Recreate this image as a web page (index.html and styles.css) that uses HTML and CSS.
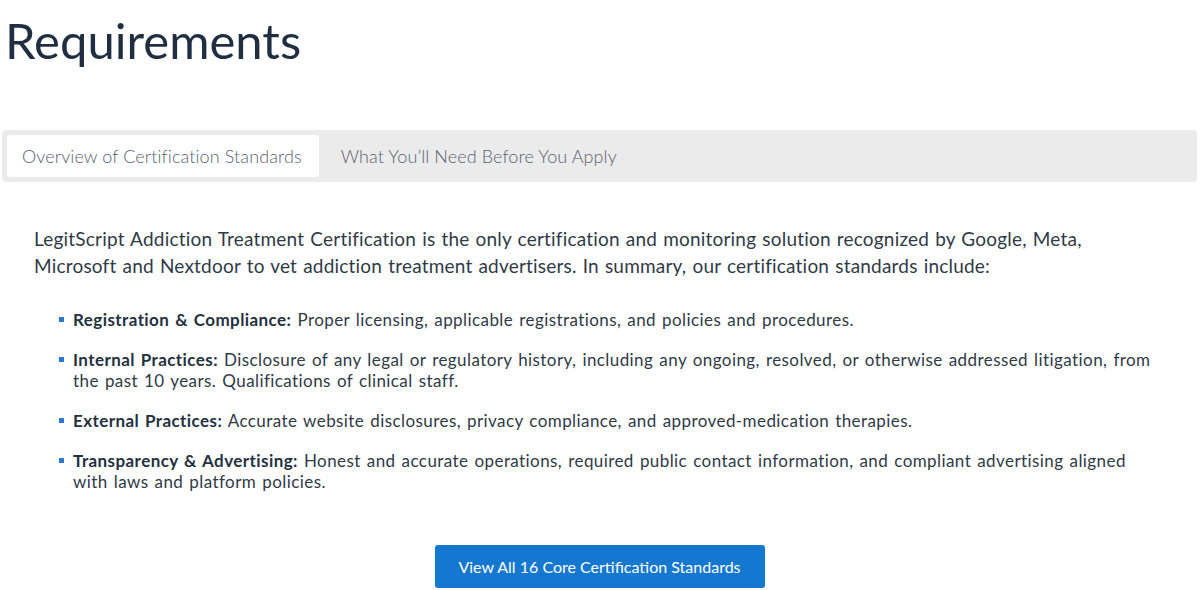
FILE: index.html
```html
<!DOCTYPE html>
<html lang="en">
<head>
<meta charset="UTF-8">
<meta name="viewport" content="width=device-width, initial-scale=1.0">
<title>Requirements</title>
<link rel="stylesheet" href="styles.css">
</head>
<body>
    <section class="requirements">
        <h1 class="title">Requirements</h1>

        <div class="tabs">
            <button type="button" class="tab active">Overview of Certification Standards</button>
            <button type="button" class="tab">What You’ll Need Before You Apply</button>
        </div>

        <div class="panel">
            <p class="intro">LegitScript Addiction Treatment Certification is the only certification and monitoring solution recognized by Google, Meta, Microsoft and Nextdoor to vet addiction treatment advertisers. In summary, our certification standards include:</p>

            <ul class="standards">
                <li><strong>Registration &amp; Compliance:</strong> Proper licensing, applicable registrations, and policies and procedures.</li>
                <li><strong>Internal Practices:</strong> Disclosure of any legal or regulatory history, including any ongoing, resolved, or otherwise addressed litigation, from the past 10 years. Qualifications of clinical staff.</li>
                <li><strong>External Practices:</strong> Accurate website disclosures, privacy compliance, and approved-medication therapies.</li>
                <li><strong>Transparency &amp; Advertising:</strong> Honest and accurate operations, required public contact information, and compliant advertising aligned with laws and platform policies.</li>
            </ul>

            <div class="actions">
                <a class="btn" href="#">View All 16 Core Certification Standards</a>
            </div>
        </div>
    </section>
</body>
</html>
```

FILE: styles.css
```css
/* Requirements block */
body {
    margin: 0;
    background: #fff;
    font-family: Lato, "Noto Sans", sans-serif;
    color: #2f3a46;
}
.requirements {
    padding: 0 3px 0 2px;
}
.title {
    margin: 0;
    padding: 12px 0 0 3px;
    font-size: 49px;
    font-weight: 400;
    line-height: 56px;
    color: #1f2e40;
}
.tabs {
    display: flex;
    margin-top: 62px;
    padding: 5px;
    background: #ebebeb;
    border-radius: 4px;
}
.tab {
    padding: 0 17px 0 15px;
    height: 42px;
    border: none;
    border-radius: 3px;
    background: transparent;
    font-family: inherit;
    font-size: 18px;
    font-weight: 300;
    letter-spacing: 0.1px;
    color: #5a6270;
    cursor: pointer;
}
.tab + .tab {
    margin-left: 7px;
}
.tab.active {
    background: #fff;
}
.panel {
    padding: 43px 32px 0 32px;
}
.intro {
    margin: 0;
    font-size: 19px;
    line-height: 27px;
    letter-spacing: 0.2px;
    word-spacing: 1px;
}
.standards {
    list-style: none;
    margin: 30px 0 0 0;
    padding: 0 0 0 39px;
}
.standards li {
    position: relative;
    font-size: 17px;
    line-height: 21px;
    letter-spacing: 0.42px;
    word-spacing: 1.3px;
    margin-bottom: 19px;
}
.standards li::before {
    content: "";
    position: absolute;
    left: -14px;
    top: 8px;
    width: 5px;
    height: 5px;
    background: #2a7bd0;
}
.standards strong {
    font-weight: 700;
    color: #243140;
}
.actions {
    display: flex;
    justify-content: center;
    margin-top: 53px;
}
.btn {
    display: inline-block;
    width: 330px;
    height: 43px;
    line-height: 43px;
    text-align: center;
    background: #1478d0;
    color: #fff;
    border-radius: 3px;
    text-decoration: none;
    font-size: 16px;
}
```
